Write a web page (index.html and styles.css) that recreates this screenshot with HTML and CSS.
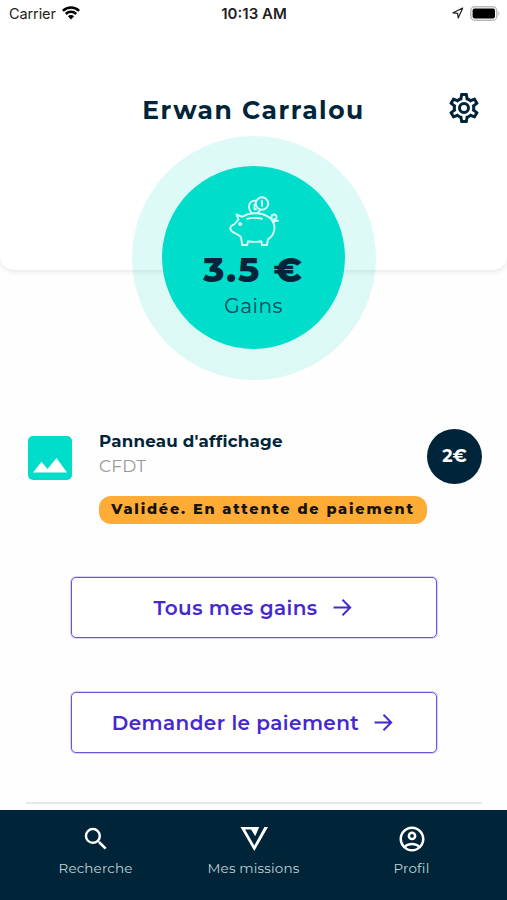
FILE: index.html
```
<!DOCTYPE html>
<html lang="fr">
<head>
<meta charset="utf-8">
<meta name="viewport" content="width=device-width">
<title>Profil</title>
<link rel="stylesheet" href="styles.css">
</head>
<body>
<div class="screen">
  <header class="top">
    <div class="status">
      <div class="carrier"><span>Carrier</span>
        <svg width="18" height="14" viewBox="0 0 18 14" fill="none" stroke="#000" stroke-width="2.5"><path d="M.9 4.900a11.500 11.500 0 0 1 16.200 0M3.800 8a7.400 7.400 0 0 1 10.400 0"/><path d="M9 13.400 5.900 10.300a4.400 4.400 0 0 1 6.200 0z" fill="#000" stroke="none"/></svg>
      </div>
      <div class="clock">10:13 AM</div>
      <div class="power">
        <svg width="12" height="12" viewBox="0 0 12 12" fill="none" stroke="#222" stroke-width="1.200" stroke-linejoin="round"><path d="M10.700 1 1 5.800l4.600.6.600 4.600z"/></svg>
        <svg width="31" height="15" viewBox="0 0 31 15"><rect x=".8" y=".8" width="26" height="13.400" rx="4" fill="#fff" stroke="#bbb" stroke-width="1.500"/><rect x="2.600" y="2.600" width="22.400" height="9.800" rx="1.800"/><path d="M28.500 5q2 2.500 0 5z" fill="#aaa"/></svg>
      </div>
    </div>
    <div class="heading">
      <h1>Erwan Carralou</h1>
      <svg class="gear" width="36" height="36" viewBox="0 0 24 24" fill="#00253a"><path d="M12 8a4 4 0 0 1 4 4 4 4 0 0 1-4 4 4 4 0 0 1-4-4 4 4 0 0 1 4-4m0 2a2 2 0 0 0-2 2 2 2 0 0 0 2 2 2 2 0 0 0 2-2 2 2 0 0 0-2-2m-2 12c-.25 0-.46-.18-.5-.42l-.37-2.650c-.63-.25-1.170-.59-1.690-.99l-2.490 1.010c-.22.080-.49 0-.61-.22l-2-3.460c-.13-.22-.070-.49.120-.64l2.110-1.660L4.500 12l.070-1-2.110-1.630c-.19-.15-.25-.42-.12-.64l2-3.460c.12-.22.390-.31.610-.22l2.490 1c.52-.39 1.060-.73 1.690-.98l.37-2.650c.04-.24.25-.42.5-.42h4c.25 0 .46.180.5.420l.37 2.650c.63.250 1.170.590 1.690.980l2.490-1c.22-.09.490 0 .610.220l2 3.460c.13.220.070.490-.12.640L19.430 11l.07 1-.07 1 2.110 1.630c.19.150.25.420.12.640l-2 3.460c-.12.220-.39.310-.61.220l-2.490-1c-.52.390-1.060.730-1.690.980l-.37 2.650c-.04.240-.25.420-.5.420zm1.250-18-.37 2.610c-1.200.25-2.260.89-3.030 1.780L5.440 7.350l-.75 1.300L6.800 10.200a6.400 6.400 0 0 0 0 3.600l-2.120 1.560.75 1.300 2.430-1.040c.77.880 1.820 1.520 3.010 1.760l.37 2.620h1.520l.37-2.610c1.190-.25 2.240-.89 3.010-1.770l2.430 1.040.75-1.300-2.120-1.550c.4-1.170.4-2.440 0-3.610l2.110-1.550-.75-1.300-2.410 1.040a5.400 5.400 0 0 0-3.030-1.770L12.750 4z"/></svg>
    </div>
  </header>
  <section class="halo">
    <div class="disc">
      <svg class="pig" width="50" height="50" viewBox="0 0 50 50" fill="none" stroke="#dcfff9" stroke-width="1.900" stroke-linejoin="round" stroke-linecap="round">
        <path d="M9.500 23.500 7.500 18.500l6 2.300C17 18.200 21 17.200 26 17.200c11.500 0 19.500 6 19.500 14.800 0 5-2.400 8.500-6.500 11.500L38 49h-5l-.7-3.800c-4 .8-9.500.8-13.300 0L18.200 49h-5l-1.100-7.500C9.500 37.500 5 37.500 2.500 35 .8 33.200 1 30.500 3 29.500 6.500 28.500 6.500 26.500 9.500 23.500zM18 22.800q7-1.800 15 0"/>
        <path d="M44.500 26.500c-3-4-2.500-8 .5-8 3.500 0 3.500 5.500-.5 5M45.500 25l3.500-.3"/>
        <circle cx="33" cy="7.500" r="6.200"/><path d="M33 5v5M26.500 4.800c-4-.5-6.500 2.200-6.500 6 0 2.500 1 4.500 2.500 5.900M31 13.700c-.4 1.500-1.400 2.500-2.800 3.300M25.500 8.500v4.800h1.500"/>
        <circle cx="11.200" cy="28" r="1.500" fill="#dcfff9" stroke-width="1"/>
      </svg>
      <div class="total">3.5 €</div>
      <div class="label">Gains</div>
    </div>
  </section>
  <main>
    <article class="mission">
      <svg class="thumb" width="44" height="44" viewBox="0 0 44 44"><rect width="44" height="44" rx="5" fill="#00ddcb"/><path d="m5 36.500 8.500-10.700 6 7.200L28.500 22 39 36.500z" fill="#fff"/></svg>
      <div class="details">
        <h2>Panneau d'affichage</h2>
        <p>CFDT</p>
        <div class="badge">Validée. En attente de paiement</div>
      </div>
      <div class="amount">2€</div>
    </article>
    <div class="actions">
      <button class="all"><span>Tous mes gains</span><svg width="19" height="19" viewBox="0 0 18 18" fill="none" stroke="#4528cf" stroke-width="1.800"><path d="M.5 9h15.500M9 1.700 16.300 9 9 16.300"/></svg></button>
      <button class="pay"><span>Demander le paiement</span><svg width="19" height="19" viewBox="0 0 18 18" fill="none" stroke="#4528cf" stroke-width="1.800"><path d="M.5 9h15.500M9 1.700 16.300 9 9 16.300"/></svg></button>
    </div>
    <hr>
  </main>
  <nav>
    <a class="search"><svg width="30" height="30" viewBox="0 0 24 24" fill="#fff"><path d="M15.500 14h-.79l-.28-.27A6.470 6.470 0 0 0 16 9.500 6.500 6.500 0 1 0 9.500 16c1.610 0 3.090-.59 4.230-1.570l.27.280v.79l5 4.990L20.490 19zm-6 0C7.010 14 5 11.990 5 9.500S7.010 5 9.500 5 14 7.010 14 9.500 11.990 14 9.500 14z"/></svg><span>Recherche</span></a>
    <a class="missions"><svg width="30" height="30" viewBox="0 0 30 30"><path d="M1.500 3h18.700l-4 9.300-4.100-6.900H6.100l9.200 16.100L25.400 3H29L15.300 27z" fill="#fff"/></svg><span>Mes missions</span></a>
    <a class="profile"><svg width="30" height="30" viewBox="0 0 24 24" fill="#fff"><path d="M12 2C6.480 2 2 6.480 2 12s4.480 10 10 10 10-4.480 10-10S17.520 2 12 2zM7.350 18.500C8.660 17.560 10.260 17 12 17s3.340.56 4.650 1.500C15.340 19.440 13.740 20 12 20s-3.340-.56-4.650-1.500zm10.790-1.380C16.450 15.800 14.320 15 12 15s-4.450.8-6.140 2.120A7.960 7.960 0 0 1 4 12c0-4.420 3.580-8 8-8s8 3.580 8 8c0 1.950-.7 3.730-1.860 5.120zM12 6a3.500 3.500 0 1 0 0 7 3.500 3.500 0 0 0 0-7zm0 5a1.500 1.500 0 1 1 0-3 1.500 1.500 0 0 1 0 3z"/></svg><span>Profil</span></a>
  </nav>
</div>
</body>
</html>
```
FILE: styles.css
```
* { box-sizing: border-box; }
body { margin: 0; font-family: Montserrat, Inter, "Liberation Sans", sans-serif; color: #00253a; background: #fefefe; }
h1, h2, p { margin: 0; }
svg { display: block; flex: none; }
.screen { height: 900px; display: flex; flex-direction: column; overflow: hidden; white-space: nowrap; }
.top { height: 270px; flex: none; border-radius: 0 0 14px 14px; background: #fff; box-shadow: 0 2px 5px rgba(0,0,0,.09); }
.status { height: 28px; display: grid; grid-template-columns: 1fr auto 1fr; align-items: center; padding: 0 6px 0 9px; font: 14.500px/28px Inter, sans-serif; color: #222; }
.carrier { display: flex; align-items: center; gap: 6px; letter-spacing: -.1px; }
.carrier svg { margin-top: -2px; }
.clock { font-weight: 600; font-size: 15px; letter-spacing: 0; margin-left: -2px; }
.power { display: flex; justify-content: flex-end; align-items: center; gap: 6px; margin-top: -2px; }
.heading { display: grid; grid-template-columns: 1fr auto 1fr; align-items: center; padding: 58px 25px 0; height: 104px; }
h1 { grid-column: 2; font-size: 25px; line-height: 42px; font-weight: 700; letter-spacing: 1.550px; margin-top: 2px; }
.gear { justify-self: end; margin-top: -3px; }
.halo { width: 244px; height: 244px; flex: none; margin: -134.500px auto 0; border-radius: 50%; background: rgba(0,215,190,.13); display: flex; align-items: center; justify-content: center; }
.disc { width: 183px; height: 183px; border-radius: 50%; background: #00ddcb; display: flex; flex-direction: column; align-items: center; padding-top: 30px; }
.total { font-size: 35px; line-height: 44px; font-weight: 800; letter-spacing: 1.900px; margin-top: 2px; }
.label { font-size: 20px; line-height: 24px; letter-spacing: .5px; margin-top: 2px; color: #06465a; }
.mission { display: flex; margin-top: 49px; padding: 0 25px 0 28px; height: 97px; }
.thumb { margin-top: 7.500px; }
.details { margin-left: 27px; flex: 1; min-width: 0; }
h2 { font-size: 16.700px; line-height: 24px; font-weight: 700; letter-spacing: .2px; }
.details p { font-size: 17px; line-height: 24px; color: #999; margin-top: 1px; letter-spacing: .2px; }
.badge { width: 328px; height: 28px; margin-top: 18px; border-radius: 12px; background: #ffac36; color: #17130d; font-size: 14.500px; line-height: 26px; font-weight: 800; letter-spacing: 1.780px; text-align: center; }
.amount { width: 55px; height: 55px; border-radius: 50%; background: #00253a; color: #fff; font-size: 17.500px; font-weight: 700; line-height: 54px; text-align: center; }
.actions { display: flex; flex-direction: column; gap: 54px; width: 366px; margin: 51.500px 0 0 71px; }
button { height: 61px; border: 1px solid #6c55d2; box-shadow: 0 0 0 1px #d9d3f5; border-radius: 5px; background: #fff; display: flex; align-items: center; justify-content: center; gap: 15px; font: 600 20px/28px Montserrat, Inter, sans-serif; color: #4528cf; letter-spacing: .4px; padding: 0 3px 0 0; }
hr { height: 2px; border: 0; background: #e8e8e8; margin: 49px 25px 0 26px; }
nav { height: 90px; flex: none; margin-top: auto; background: #002538; display: flex; padding: 14px 16.500px 0; }
nav a { flex: 1; display: flex; flex-direction: column; align-items: center; gap: 5px; font-size: 13.500px; line-height: 18px; color: #c1d2d8; letter-spacing: .15px; }
```
